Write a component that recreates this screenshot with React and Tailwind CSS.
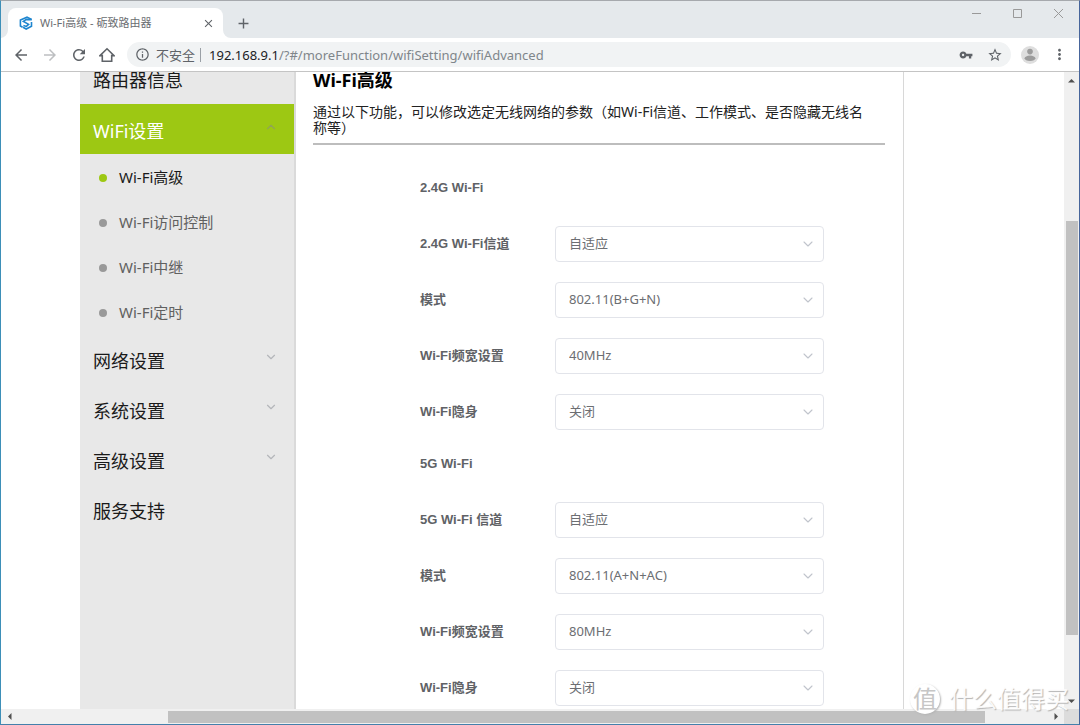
import React, { useState } from 'react';
import { ChevronDown, ChevronUp } from 'lucide-react';
import {
  MdAdd,
  MdArrowBack,
  MdArrowForward,
  MdClose,
  MdInfoOutline,
  MdMoreVert,
  MdRefresh,
  MdStarBorder,
  MdVpnKey
} from 'react-icons/md';


const subItems = ['Wi-Fi高级', 'Wi-Fi访问控制', 'Wi-Fi中继', 'Wi-Fi定时'];

const menuItems = [
  { label: '网络设置', expandable: true },
  { label: '系统设置', expandable: true },
  { label: '高级设置', expandable: true },
  { label: '服务支持', expandable: false }
];

const sections = [
  {
    title: '2.4G Wi-Fi',
    fields: [
      { id: 'channel24', label: '2.4G Wi-Fi信道', options: ['自适应', '1', '6', '11'] },
      { id: 'mode24', label: '模式', options: ['802.11(B+G+N)', '802.11(B+G)', '802.11(N)'] },
      { id: 'width24', label: 'Wi-Fi频宽设置', options: ['40MHz', '20MHz'] },
      { id: 'hidden24', label: 'Wi-Fi隐身', options: ['关闭', '开启'] }
    ]
  },
  {
    title: '5G Wi-Fi',
    fields: [
      { id: 'channel5', label: '5G Wi-Fi 信道', options: ['自适应', '36', '149'] },
      { id: 'mode5', label: '模式', options: ['802.11(A+N+AC)', '802.11(A+N)'] },
      { id: 'width5', label: 'Wi-Fi频宽设置', options: ['80MHz', '40MHz', '20MHz'] },
      { id: 'hidden5', label: 'Wi-Fi隐身', options: ['关闭', '开启'] }
    ]
  }
];


const TitleBar = () => (
  <div className="flex h-[37px] shrink-0 bg-[#e5e9ec]">
    <div className="relative flex items-center w-[215px] h-[30px] mt-[7px] ml-[7px] pl-[11px] pr-2 bg-white rounded-t-lg">
      {/* curved feet of the tab */}
      <svg className="absolute bottom-0 right-full w-2 h-2" viewBox="0 0 8 8" fill="#fff">
        <path d="M8 0v8H0a8 8 0 0 0 8-8z" />
      </svg>
      <svg className="absolute bottom-0 left-full w-2 h-2" viewBox="0 0 8 8" fill="#fff">
        <path d="M0 0v8h8a8 8 0 0 1-8-8z" />
      </svg>
      <svg className="w-[14px] h-[14px]" viewBox="0 0 14 14" fill="none" stroke="#1f86cf" strokeWidth="1.6">
        <path d="M12.6 3.4L8 1.2 1.4 4v6l2.2 1.3" />
        <path d="M12.8 3.6L7.4 3.4 4.4 5.4 9.6 8.4 7.4 10.4 4.4 9.4" />
        <path d="M12.5 6v4.2L7.2 13 4 11.2" />
      </svg>
      <span className="flex-1 ml-[7px] text-[11px] text-[#6a6d71] whitespace-nowrap">Wi-Fi高级 - 砺致路由器</span>
      <button type="button" aria-label="关闭标签页" className="text-[#5f6368]">
        <MdClose size={13} />
      </button>
    </div>
    <button type="button" aria-label="新标签页" className="self-center ml-3 mt-[7px] text-[#5f6368]">
      <MdAdd size={17} />
    </button>
    <div className="flex items-start ml-auto mr-[15px] mt-[7px] gap-[30px] text-[#999]">
      <button type="button" aria-label="最小化">
        <svg className="w-[11px] h-[11px]" viewBox="0 0 11 11" stroke="currentColor"><path d="M1 5.5h9" /></svg>
      </button>
      <button type="button" aria-label="最大化">
        <svg className="w-[11px] h-[11px]" viewBox="0 0 11 11" fill="none" stroke="currentColor"><path d="M1.5 1.5h8v8h-8z" /></svg>
      </button>
      <button type="button" aria-label="关闭">
        <svg className="w-[11px] h-[11px]" viewBox="0 0 11 11" stroke="currentColor"><path d="M1 1l9 9M10 1l-9 9" /></svg>
      </button>
    </div>
  </div>
);


const Toolbar = () => (
  <div className="flex items-center h-[34px] shrink-0 pl-[11px] pr-[11px] bg-white border-b border-[#c4c4c4] text-[#5f6368]">
    <div className="flex items-center gap-[11px]">
      <button type="button" aria-label="后退"><MdArrowBack size={18} /></button>
      <button type="button" aria-label="前进" className="text-[#bdbfc1]"><MdArrowForward size={18} /></button>
      <button type="button" aria-label="重新加载"><MdRefresh size={18} /></button>
      <button type="button" aria-label="主页">
        <svg className="w-4 h-4" viewBox="0 0 16 16" fill="none" stroke="currentColor" strokeWidth="1.6">
          <path d="M1 8.6L8 1.8l7 6.8h-2.3v5.6H3.3V8.6z" />
        </svg>
      </button>
    </div>
    <div className="flex items-center flex-1 h-[25px] ml-3 px-2 bg-[#f1f3f4] rounded-full">
      <MdInfoOutline size={15} />
      <span className="ml-[6px] text-[13px] leading-4">不安全</span>
      <span className="w-px h-[14px] ml-[5px] mr-2 bg-[#9aa0a6]" />
      <span className="text-[13px] leading-4 text-[#202124]">192.168.9.1</span>
      <input
        type="text"
        aria-label="地址"
        className="flex-1 min-w-0 text-[13px] leading-4 text-[#80868b] bg-transparent outline-none"
        defaultValue="/?#/moreFunction/wifiSetting/wifiAdvanced"
      />
      <button type="button" aria-label="密码"><MdVpnKey size={14} /></button>
      <button type="button" aria-label="收藏" className="ml-[14px]"><MdStarBorder size={16} /></button>
    </div>
    <button type="button" aria-label="用户" className="ml-[10px]">
      <svg className="w-[18px] h-[18px]" viewBox="0 0 18 18">
        <circle cx="9" cy="9" r="9" fill="#dedede" />
        <circle cx="9" cy="5.6" r="2.8" fill="#9c9c9c" />
        <ellipse cx="9" cy="12.3" rx="5.4" ry="2.7" fill="#9c9c9c" />
      </svg>
    </button>
    <button type="button" aria-label="菜单" className="ml-3"><MdMoreVert size={17} /></button>
  </div>
);


const Sidebar = () => {
  const [active, setActive] = useState(subItems[0]);

  return (
    <nav className="w-54 shrink-0 bg-[#e8e8e8] border-r-2 border-[#dadada]">
      <a href="#info" className="block h-8 px-[13px] text-lg leading-4 text-[#1a1a1a]">
        路由器信息
      </a>
      <button
        type="button"
        className="flex items-center justify-between w-full h-[50px] pt-1 px-[13px] text-lg text-white bg-[#9dc813]"
      >
        WiFi设置
        <ChevronUp size={14} strokeWidth={2} className="mr-[3px] mb-2 text-[#91a556]" />
      </button>
      <ul className="py-px">
        {subItems.map((item) => (
          <li key={item}>
            <a
              href="#wifi"
              onClick={() => setActive(item)}
              className={`flex items-center h-[45px] pl-[19px] text-[15px] ${active === item ? 'text-[#1a1a1a]' : 'text-[#606060]'}`}
            >
              <span className={`w-2 h-2 mr-3 rounded-full ${active === item ? 'bg-[#9dc813]' : 'bg-[#999]'}`} />
              {item}
            </a>
          </li>
        ))}
      </ul>
      {menuItems.map((item) => (
        <button
          key={item.label}
          type="button"
          className="flex items-center justify-between w-full h-[50px] px-[13px] text-lg text-[#1a1a1a]"
        >
          {item.label}
          {item.expandable && <ChevronDown size={14} strokeWidth={2} className="mr-[3px] mb-2 text-[#b4b6ba]" />}
        </button>
      ))}
    </nav>
  );
};


const Field = ({ id, label, options }) => (
  <div className="flex items-center">
    <label htmlFor={id} className="w-[135px] text-[13px] font-bold text-[#606266] font-['Liberation_Sans','Noto_Sans_CJK_SC',sans-serif]">
      {label}
    </label>
    <div className="relative w-[269px]">
      <select
        id={id}
        className="w-full h-9 pl-[13px] pr-8 text-[13px] text-[#6c6e72] bg-white border border-[#e2e4ea] rounded appearance-none outline-none"
      >
        {options.map((option) => (
          <option key={option}>{option}</option>
        ))}
      </select>
      <ChevronDown
        size={16}
        strokeWidth={1.6}
        className="absolute -translate-y-1/2 pointer-events-none right-2 top-1/2 text-[#c0c4cc]"
      />
    </div>
  </div>
);


const WifiAdvanced = () => (
  <main className="flex-1 max-w-[608px] pl-[17px] pr-[18px] border-r border-[#d8d8d8]">
    <h1 className="text-lg leading-4 font-bold text-black">Wi-Fi高级</h1>
    <p className="mt-4 text-sm leading-4 text-[#222]">
      通过以下功能，可以修改选定无线网络的参数（如Wi-Fi信道、工作模式、是否隐藏无线名
      <br />
      称等）
    </p>
    <hr className="mt-[7px] border-t-2 border-[#bdbdbd]" />
    <form className="flex flex-col gap-4 pt-[25px] pl-[107px]">
      {sections.map((section) => (
        <section key={section.title} className="flex flex-col gap-5">
          <h2 className="flex items-center h-9 text-[13px] font-bold text-[#606266] font-['Liberation_Sans',sans-serif]">
            {section.title}
          </h2>
          {section.fields.map((field) => (
            <Field key={field.id} {...field} />
          ))}
        </section>
      ))}
    </form>
  </main>
);


const Triangle = ({ className }) => (
  <svg className={`w-[7px] h-[7px] ${className}`} viewBox="0 0 7 7" fill="#505050">
    <path d="M0 5.5L3.5 2 7 5.5z" />
  </svg>
);


const VerticalScroll = () => (
  <div className="flex flex-col items-center w-[15px] shrink-0 bg-[#f0f0f0]">
    <div className="flex items-center h-4"><Triangle className="" /></div>
    <div className="flex-[133]" />
    <div className="flex-[414] w-3 bg-[#c1c1c1]" />
    <div className="flex-[58]" />
    <div className="flex items-center h-4"><Triangle className="rotate-180" /></div>
  </div>
);


const HorizontalScroll = () => (
  <div className="flex h-[15px] shrink-0 bg-[#f0f0f0]">
    <div className="flex items-center flex-1">
      <div className="flex justify-center w-4"><Triangle className="-rotate-90" /></div>
      <div className="flex-[151]" />
      <div className="flex-[817] h-3 bg-[#c1c1c1]" />
      <div className="flex-[63]" />
      <div className="flex justify-center w-4"><Triangle className="rotate-90" /></div>
    </div>
    <div className="w-[15px] bg-[#dcdcdc]" />
  </div>
);


const Watermark = () => (
  <div className="absolute flex items-center pointer-events-none right-[10px] bottom-[9px] gap-[9px]">
    <span className="flex items-center justify-center w-[30px] h-[30px] text-2xl leading-none text-[#c6c6c6] bg-white rounded-full shadow-[1px_1px_2px_#b4b4b4]">
      值
    </span>
    <span className="text-2xl leading-8 text-white/90 [text-shadow:1px_1px_1px_#b4b4b4]">什么值得买</span>
  </div>
);


const App = () => {
  return (
    <div className="relative flex flex-col h-screen overflow-hidden bg-white border border-t-[#a6a9ad] border-l-[#3d8fb8] border-r-[#47659b] border-b-[#4480ab] font-['Noto_Sans','Noto_Sans_CJK_SC',sans-serif]">
      <TitleBar />
      <Toolbar />
      <div className="flex flex-1 min-h-0">
        <div className="flex flex-1 min-w-0 pl-[79px] overflow-hidden">
          <Sidebar />
          <WifiAdvanced />
        </div>
        <VerticalScroll />
      </div>
      <HorizontalScroll />
      <Watermark />
    </div>
  );
};


export default App;
